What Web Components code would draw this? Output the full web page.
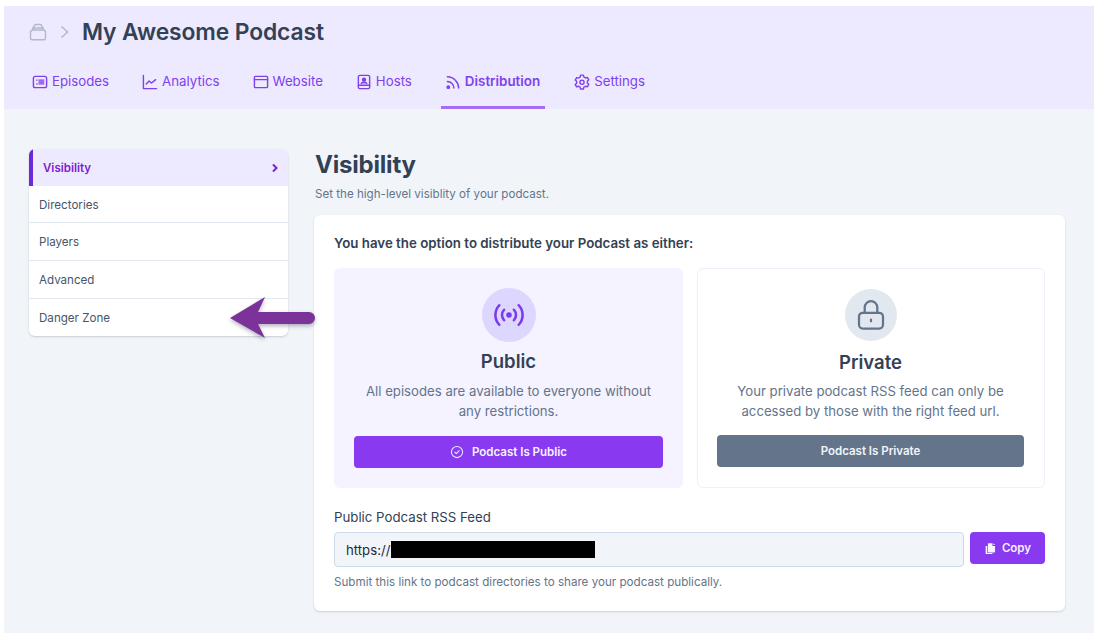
<!DOCTYPE html>
<html>
<head>
<meta charset="utf-8">
<title>Distribution</title>
<style>
  html, body { margin: 0; background: #fff; }
  body { font-family: Inter, "Liberation Sans", sans-serif; padding: 6px 4px 0; }
</style>
</head>
<body>
<podcast-app>
  <podcast-header slot="header" title="My Awesome Podcast">
    <nav-tab icon="episodes">Episodes</nav-tab>
    <nav-tab icon="analytics">Analytics</nav-tab>
    <nav-tab icon="website">Website</nav-tab>
    <nav-tab icon="hosts">Hosts</nav-tab>
    <nav-tab icon="rss" active>Distribution</nav-tab>
    <nav-tab icon="settings">Settings</nav-tab>
  </podcast-header>
  <side-menu slot="side">
    <side-item active style="--h:37px">Visibility</side-item>
    <side-item style="--h:37px">Directories</side-item>
    <side-item style="--h:38px">Players</side-item>
    <side-item style="--h:38px">Advanced</side-item>
    <side-item last style="--h:37px">Danger Zone</side-item>
  </side-menu>
  <visibility-panel slot="main">
    <option-card kind="public" heading="Public" button="Podcast Is Public">All episodes are available to everyone without any restrictions.</option-card>
    <option-card kind="private" heading="Private" button="Podcast Is Private">Your private podcast RSS feed can only be accessed by those with the right feed url.</option-card>
    <feed-field slot="feed"></feed-field>
  </visibility-panel>
  <call-arrow slot="over"></call-arrow>
</podcast-app>

<script>
const ICONS = {
  episodes: '<rect x="3" y="4" width="14" height="12" rx="2"/><path d="M6.5 8h.5M6.5 12h.5M9 8h5M9 10h5M9 12h5"/>',
  analytics: '<path d="M3 3v14h14"/><path d="M6 12l3-3 2.5 2L16 7.5"/>',
  website: '<rect x="3" y="4" width="14" height="12" rx="1"/><path d="M3 7.5h14"/>',
  hosts: '<rect x="4" y="3" width="12" height="14" rx="1.5"/><path d="M4 13.5h12"/><circle cx="10" cy="7.5" r="1.6" fill="currentColor"/><path d="M7 11.5c.6-1.4 5.4-1.4 6 0" />',
  rss: '<path d="M4 9.5a7 7 0 0 1 7 7M4 4.5a12 12 0 0 1 12 12"/><circle cx="5" cy="15.5" r="1.3" fill="currentColor"/>',
  settings: '<path d="M8.5 3h3l.5 2 1.7 1 2-.6 1.5 2.6-1.5 1.4v2l1.5 1.4-1.5 2.6-2-.6-1.7 1-.5 2h-3l-.5-2-1.7-1-2 .6L2.8 13l1.5-1.4v-2L2.8 8.2l1.5-2.6 2 .6 1.7-1z" transform="translate(0 -.3)"/><circle cx="10" cy="10.3" r="2.2"/>'
};

class PodcastApp extends HTMLElement {
  constructor() {
    super();
    this.attachShadow({mode: 'open'}).innerHTML = `
      <style>
        :host { display: block; position: relative; background: #f1f5f9; height: 627px; }
        .body { display: flex; padding: 40px 29px 0 25px; gap: 27px; align-items: flex-start; }
        .side { width: 259px; flex: none; }
        .main { flex: 1; min-width: 0; }
      </style>
      <slot name="header"></slot>
      <div class="body">
        <div class="side"><slot name="side"></slot></div>
        <div class="main"><slot name="main"></slot></div>
      </div>
      <slot name="over"></slot>`;
  }
}

class PodcastHeader extends HTMLElement {
  constructor() {
    super();
    this.attachShadow({mode: 'open'}).innerHTML = `
      <style>
        :host { display: block; background: #ede9fe; height: 103px; box-sizing: border-box; padding: 12px 0 0 24px; }
        .crumb { display: flex; align-items: center; height: 27px; }
        .crumb svg { display: block; }
        h1 { margin: 0 0 0 12px; font: 600 22.8px/27px Inter, "Liberation Sans", sans-serif; color: #334155; letter-spacing: -.1px; }
        .tabs { display: flex; gap: 25px; margin-top: 18px; }
      </style>
      <div class="crumb">
        <svg width="20" height="20" viewBox="0 0 20 20" fill="none" stroke="#b4b8cc" stroke-width="1.4" stroke-linejoin="round">
          <path d="M2.5 10.5c0-1.5 1-2.5 2.5-2.5h10c1.500 0 2.500 1 2.500 2.500V16c0 1-.8 1.800-1.800 1.800H4.300c-1 0-1.800-.8-1.800-1.800z"/>
          <path d="M5 8l1.200-4.200C6.500 2.900 7 2.500 8 2.500h4c1 0 1.500.4 1.800 1.300L15 8M4 6h12"/>
        </svg>
        <svg style="margin-left:11px" width="11" height="16" viewBox="0 0 11 16" fill="none" stroke="#b4b8cc" stroke-width="1.500"><path d="M2.500 2.500L8.500 8l-6 5.500"/></svg>
        <h1></h1>
      </div>
      <div class="tabs"><slot></slot></div>`;
    this.shadowRoot.querySelector('h1').textContent = this.getAttribute('title');
    this.removeAttribute('title');
  }
}

class NavTab extends HTMLElement {
  constructor() {
    super();
    const icon = ICONS[this.getAttribute('icon')];
    this.attachShadow({mode: 'open'}).innerHTML = `
      <style>
        :host { display: block; font-size: 13.25px; color: #7f40ee; }
        .tab { display: flex; align-items: center; gap: 4px; height: 46px; padding: 0 4px 7px; box-sizing: border-box; border-bottom: 3px solid transparent; white-space: nowrap; }
        :host([active]) { font-weight: 600; font-size: 13.4px; }
        :host([active]) .tab { border-bottom-color: #a56cf7; padding-right: 5px; }
        svg { display: block; margin-top: 2px; flex: none; }
      </style>
      <div class="tab">
        <svg width="16" height="16" viewBox="1.500 1.500 17 17" fill="none" stroke="currentColor" stroke-width="1.500" stroke-linecap="round" stroke-linejoin="round">${icon}</svg>
        <span><slot></slot></span>
      </div>`;
  }
}

class SideMenu extends HTMLElement {
  constructor() {
    super();
    this.attachShadow({mode: 'open'}).innerHTML = `
      <style>
        :host { display: block; background: #fff; border-radius: 6px; box-shadow: 0 1px 2px rgba(51,65,85,.22); overflow: hidden; }
      </style>
      <slot></slot>`;
  }
}

class SideItem extends HTMLElement {
  constructor() {
    super();
    this.attachShadow({mode: 'open'}).innerHTML = `
      <style>
        :host { display: flex; align-items: center; justify-content: space-between; height: var(--h, 37px); box-sizing: border-box; padding: 1px 10px 0; border-bottom: 1px solid #e2e8f0; font-size: 11.600px; color: #475569; }
        :host([last]) { border-bottom: 0; padding-top: 0; }
        :host([active]) { background: #ede9fe; color: #7c22ce; font-weight: 600; border-left: 4px solid #6d28d9; border-bottom: 0; font-size: 11.500px; padding: 0 9px 0 10px; }
        svg { display: none; }
        :host([active]) svg { display: block; }
      </style>
      <span><slot></slot></span>
      <svg width="8" height="10" viewBox="0 0 8 10" fill="none" stroke="#7c22ce" stroke-width="2"><path d="M2 1.500L5.500 5 2 8.500"/></svg>`;
  }
}

class VisibilityPanel extends HTMLElement {
  constructor() {
    super();
    this.attachShadow({mode: 'open'}).innerHTML = `
      <style>
        :host { display: block; }
        h2 { margin: 0; font: 700 24px/32px Inter, "Liberation Sans", sans-serif; color: #334155; letter-spacing: -.2px; }
        .sub { margin: 3px 0 0; font-size: 11.600px; line-height: 20px; color: #64748b; }
        .card { margin: 11px 0 0 -1px; background: #fff; border-radius: 6px; box-shadow: 0 1px 2px rgba(51,65,85,.2); padding: 19px 20px 18px 20px; height: 396px; box-sizing: border-box; }
        .lead { margin: 0; font-size: 13.300px; font-weight: 600; line-height: 18px; color: #334155; }
        .grid { display: grid; grid-template-columns: 349px 348px; gap: 14px; margin-top: 16px; }
      </style>
      <h2>Visibility</h2>
      <p class="sub">Set the high-level visiblity of your podcast.</p>
      <div class="card">
        <p class="lead">You have the option to distribute your Podcast as either:</p>
        <div class="grid"><slot></slot></div>
        <slot name="feed"></slot>
      </div>`;
  }
}

class OptionCard extends HTMLElement {
  constructor() {
    super();
    const pub = this.getAttribute('kind') === 'public';
    const glyph = pub
      ? `<svg width="36" height="36" viewBox="0 0 24 24" fill="none" stroke="#7c3aed" stroke-width="1.700" stroke-linecap="round"><path d="M5.500 5.500a9.500 9.500 0 0 0 0 13M18.500 5.500a9.500 9.500 0 0 1 0 13M8.700 8.500a5.200 5.200 0 0 0 0 7M15.300 8.500a5.200 5.200 0 0 1 0 7"/><circle cx="12" cy="12" r="1" fill="#7c3aed"/></svg>`
      : `<svg width="36" height="36" viewBox="0 0 24 24" fill="none" stroke="#64748b" stroke-width="1.500" stroke-linecap="round"><rect x="4" y="10.500" width="16" height="10.500" rx="2.500"/><path d="M7.800 10.500V7a4.200 4.200 0 0 1 8.400 0v3.500M12 15v1.200"/></svg>`;
    const check = pub
      ? `<svg width="14" height="14" viewBox="0 0 20 20" fill="none" stroke="#ede9fe" stroke-width="1.500" stroke-linecap="round" stroke-linejoin="round"><circle cx="10" cy="10" r="8"/><path d="M6.800 10.200l2.200 2.200 4.200-4.400"/></svg>`
      : '';
    this.attachShadow({mode: 'open'}).innerHTML = `
      <style>
        :host { display: block; box-sizing: border-box; height: 220px; border-radius: 6px; text-align: center; }
        :host([kind=public]) { background: #f5f3ff; padding: 20px 20px 0; --h3: 6px; --p: 7px; --b: 15px; }
        :host([kind=private]) { border: 1px solid #f1effc; padding: 20px 20px 0 19px; --h3: 8px; --p: 6px; --b: 14px; }
        .circle { width: 54px; height: 54px; margin: 0 auto; border-radius: 50%; display: flex; align-items: center; justify-content: center; background: #ddd6fe; }
        :host([kind=private]) .circle { background: #e2e8f0; width: 52px; height: 52px; }
        h3 { margin: var(--h3) 0 0; font: 600 18.500px/26px Inter, "Liberation Sans", sans-serif; color: #334155; }
        p { margin: var(--p) 0 0; font-size: 13.200px; line-height: 20px; color: #64748b; height: 40px; }
        .btn { display: flex; align-items: center; justify-content: center; gap: 8px; height: 32px; margin-top: var(--b); border-radius: 4px; background: #893af0; color: #f5f3ff; font-size: 11.500px; font-weight: 600; }
        :host([kind=private]) .btn { background: #64748b; color: #f1f5f9; }
      </style>
      <div class="circle">${glyph}</div>
      <h3></h3>
      <p><slot></slot></p>
      <div class="btn">${check}<span class="lbl"></span></div>`;
    this.shadowRoot.querySelector('h3').textContent = this.getAttribute('heading');
    this.shadowRoot.querySelector('.lbl').textContent = this.getAttribute('button');
  }
}

class FeedField extends HTMLElement {
  constructor() {
    super();
    this.attachShadow({mode: 'open'}).innerHTML = `
      <style>
        :host { display: block; margin-top: 19px; }
        label { display: block; font-size: 13.250px; line-height: 20px; color: #334155; }
        .row { display: flex; gap: 6px; margin-top: 5px; align-items: flex-start; }
        .input { flex: 1; height: 35px; box-sizing: border-box; border: 1px solid #cbd9e8; border-radius: 4px; background: #f1f5f9; padding: 0 11px; display: flex; align-items: center; font-size: 13.200px; color: #1e293b; }
        .mask { display: inline-block; width: 204px; height: 17px; background: #000; margin-left: 1px; }
        .copy { width: 75px; height: 32px; border-radius: 4px; background: #893af0; color: #f5f3ff; display: flex; align-items: center; justify-content: center; gap: 5px; font-size: 11.500px; font-weight: 600; }
        .help { margin: 6px 0 0; font-size: 11.630px; line-height: 18px; color: #64748b; }
      </style>
      <label>Public Podcast RSS Feed</label>
      <div class="row">
        <div class="input"><span>https://</span><span class="mask"></span></div>
        <div class="copy">
          <svg width="13" height="13" viewBox="0 0 20 20" fill="#f5f3ff"><path d="M7 2h6v4h4v9a1 1 0 0 1-1 1H7a1 1 0 0 1-1-1V3a1 1 0 0 1 1-1zM14.500 2L17 4.500h-2.500z"/><path d="M2.500 6H5v11h8v1.500H3.500a1 1 0 0 1-1-1z"/></svg>
          <span>Copy</span>
        </div>
      </div>
      <p class="help">Submit this link to podcast directories to share your podcast publically.</p>`;
  }
}

class CallArrow extends HTMLElement {
  constructor() {
    super();
    this.attachShadow({mode: 'open'}).innerHTML = `
      <style>
        :host { display: block; position: absolute; left: 226px; top: 289px; width: 90px; height: 46px; }
        svg { display: block; overflow: visible; filter: drop-shadow(0 2px 2px rgba(40,30,60,.35)); }
      </style>
      <svg width="90" height="46" viewBox="0 0 90 46">
        <path d="M0 23L35 2l-7 15h51a6 6 0 0 1 0 12H28l7 14z" fill="#7b3299"/>
      </svg>`;
  }
}

customElements.define('podcast-app', PodcastApp);
customElements.define('podcast-header', PodcastHeader);
customElements.define('nav-tab', NavTab);
customElements.define('side-menu', SideMenu);
customElements.define('side-item', SideItem);
customElements.define('visibility-panel', VisibilityPanel);
customElements.define('option-card', OptionCard);
customElements.define('feed-field', FeedField);
customElements.define('call-arrow', CallArrow);
</script>
</body>
</html>
